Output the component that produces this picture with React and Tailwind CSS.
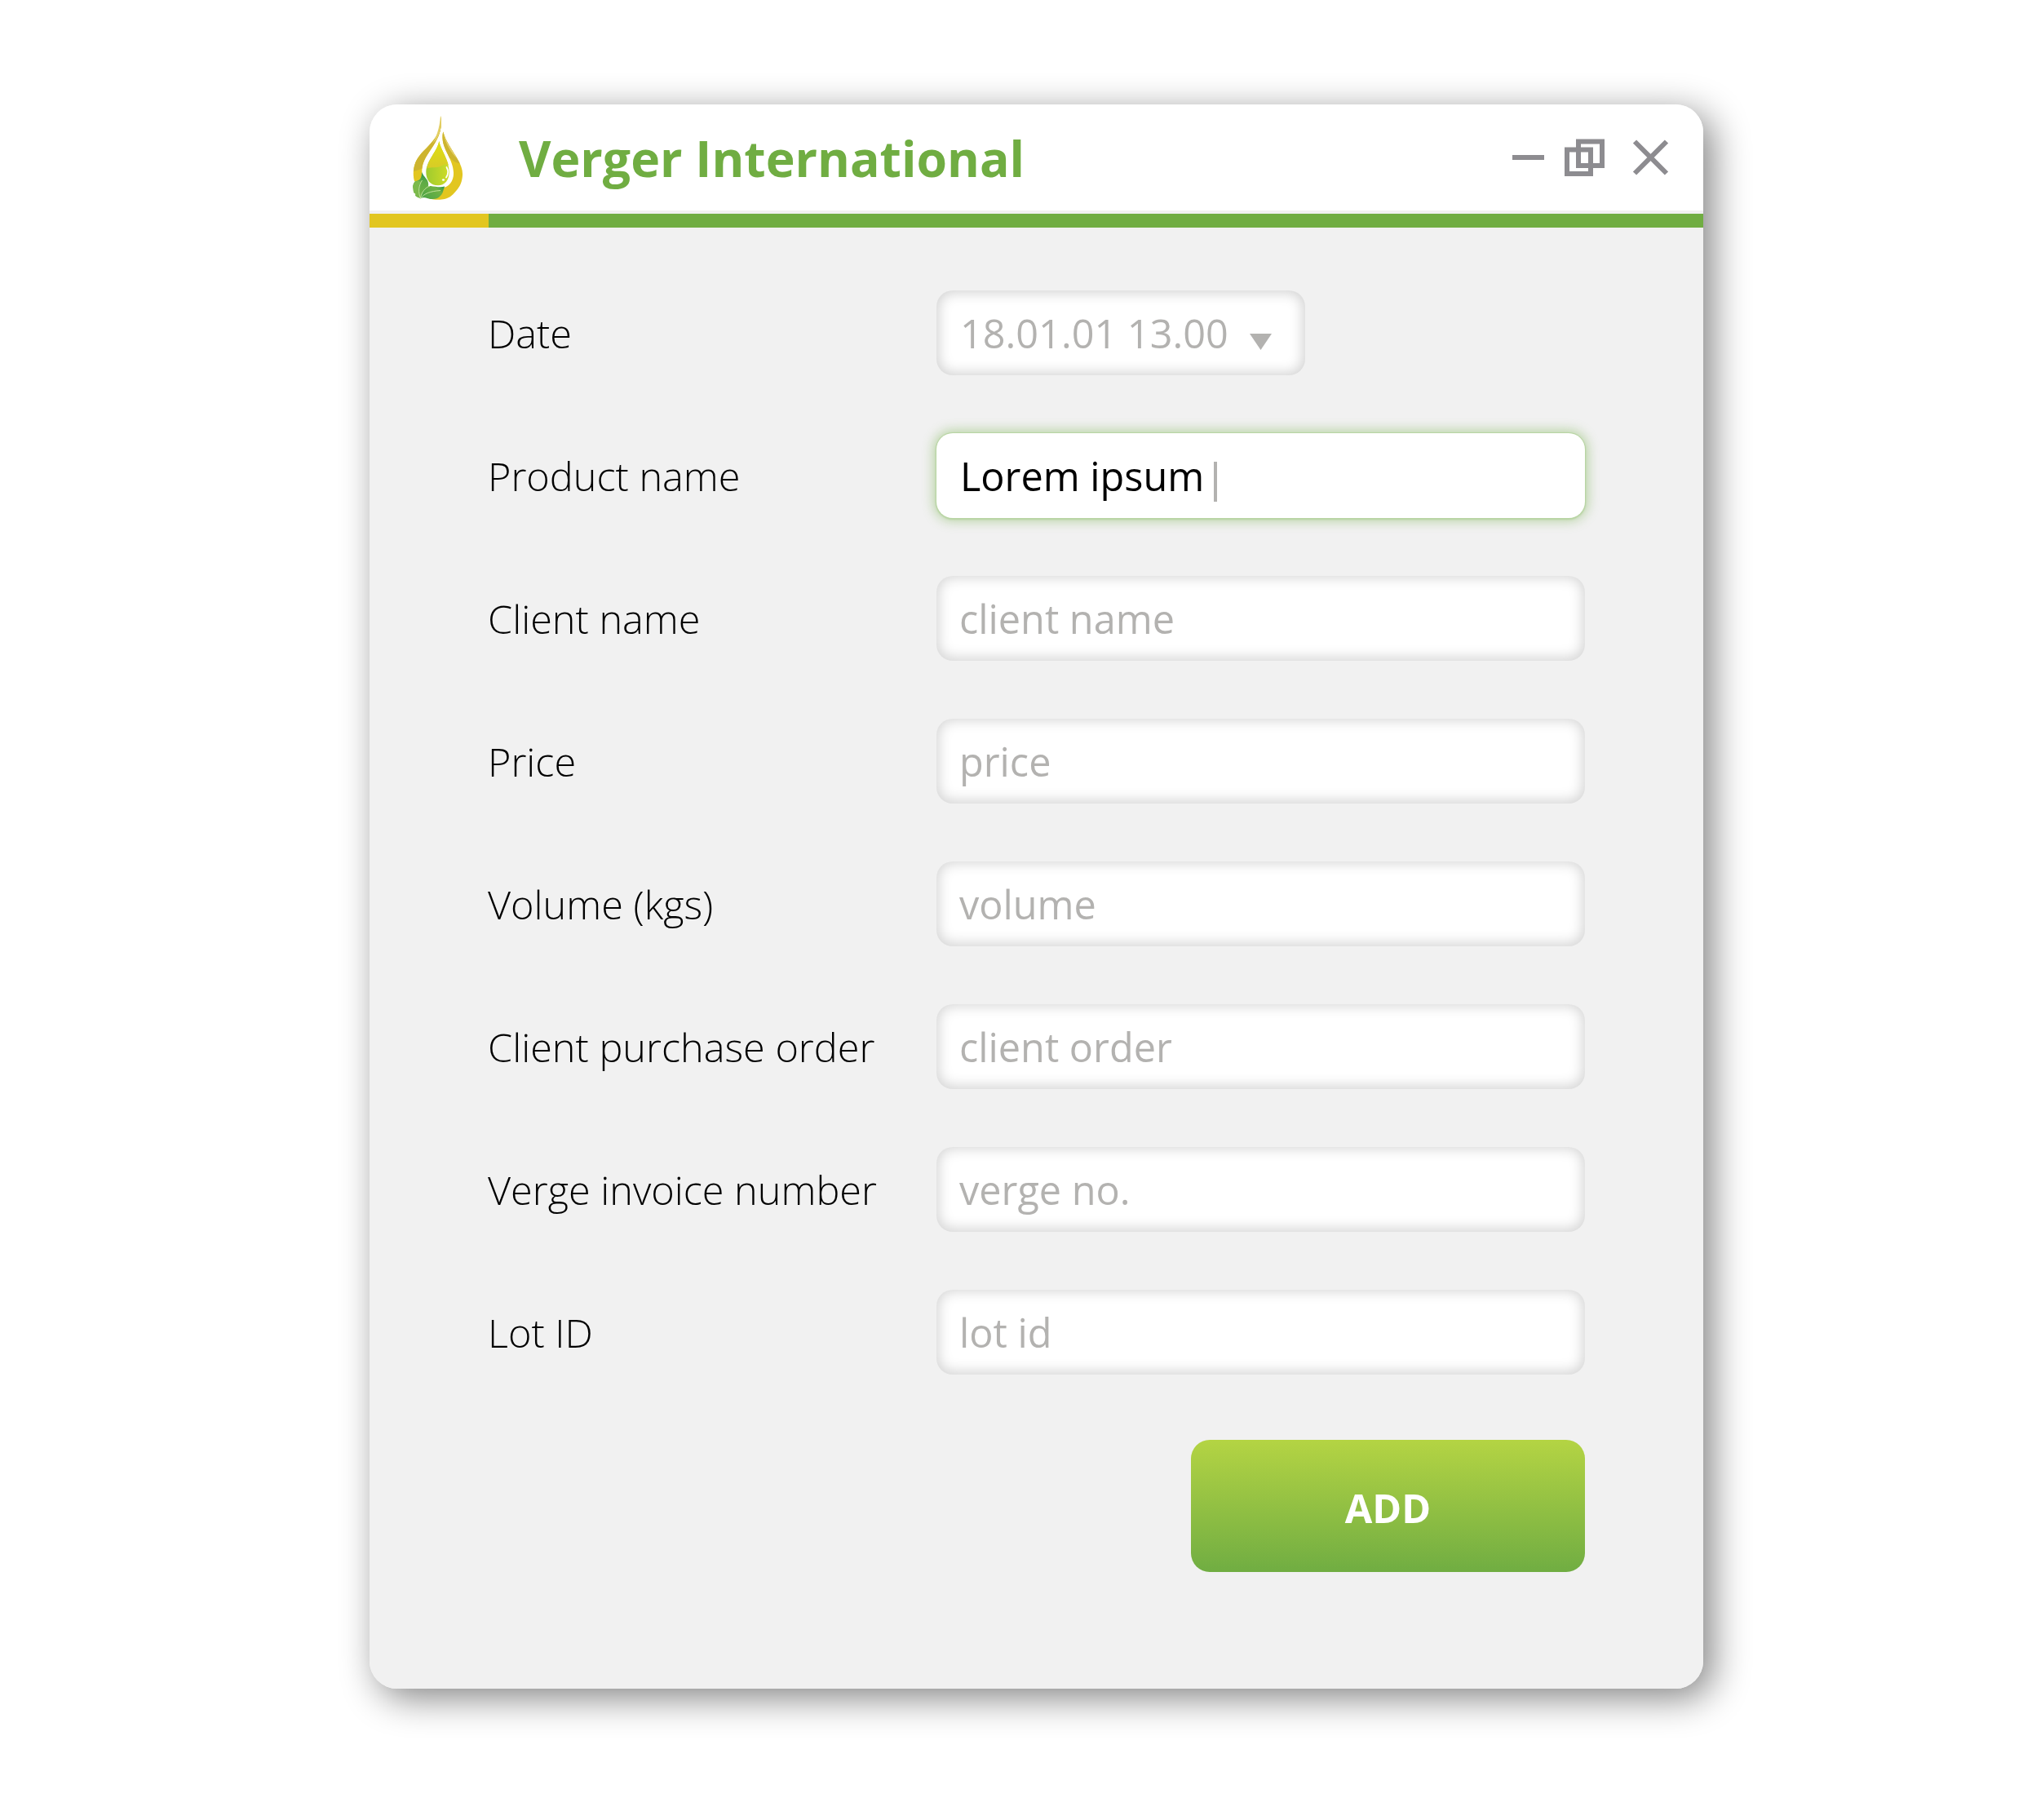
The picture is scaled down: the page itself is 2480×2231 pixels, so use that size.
import React from "react";

const ROWS = [
  { label: "Date", value: "18.01.01 13.00", kind: "select" },
  { label: "Product name", value: "Lorem ipsum", kind: "focused" },
  { label: "Client name", value: "client name" },
  { label: "Price", value: "price" },
  { label: "Volume (kgs)", value: "volume" },
  { label: "Client purchase order", value: "client order" },
  { label: "Verge invoice number", value: "verge no." },
  { label: "Lot ID", value: "lot id" },
];

function Logo() {
  return (
    <svg viewBox="0 0 72 112" className="h-[112px] w-[72px]" aria-hidden="true">
      <defs>
        <linearGradient id="drop" x1="0" y1="0" x2="1" y2="0">
          <stop offset="0" stopColor="#9fcb2e" />
          <stop offset="1" stopColor="#d0dc27" />
        </linearGradient>
        <linearGradient id="dropTop" x1="0" y1="0" x2="0" y2="1">
          <stop offset="0" stopColor="#e0e010" />
          <stop offset="1" stopColor="#d8cb28" />
        </linearGradient>
        <linearGradient id="leafA" x1="0.6" y1="0" x2="0.5" y2="1">
          <stop offset="0" stopColor="#25904a" />
          <stop offset="0.35" stopColor="#5dab45" />
          <stop offset="1" stopColor="#74b544" />
        </linearGradient>
        <linearGradient id="leafB" x1="1" y1="0" x2="0" y2="0.6">
          <stop offset="0" stopColor="#25904a" />
          <stop offset="0.35" stopColor="#6fb244" />
          <stop offset="1" stopColor="#4fa546" />
        </linearGradient>
        <clipPath id="upper">
          <path d="M0 0H72V62C64 64 58 62 52 56L30 56C24 68 16 70 0 74Z" />
        </clipPath>
        <path id="swirls" d="M40 4C42.500 14 40 25 35 34C30 44 22 52 18.500 63C16.500 70 17 80 20 86L8 84C6.500 79 6.500 73 7.300 68.500C8.500 61 11.500 56 16.500 50C24 42 32 35 36.700 25.500C39 19 40.500 12 40 4ZM43.300 23.500C46 35 54 45 61.700 58.500C65 64 67.500 71 67 77C66.500 84 64.500 90 60 95C56 100 52 104.500 45 106C40 107.200 32 107 26 105.500L42 92.500C51 91 56.500 83 56 73.500C55.500 57 42 45 42.500 30C42.500 27.500 42.800 25 43.300 23.500Z" />
      </defs>
      <use href="#swirls" fill="#e2c620" />
      <use href="#swirls" fill="#cdb42f" clipPath="url(#upper)" />
      <path d="M40 4C42.500 14 40 25 35 33L30 38C34 32 39 20 40 4ZM43.300 23.500C46 35 54 45 61 57C54 50 46 40 43.300 23.500Z" fill="#e3cf66" />
      <path d="M38.300 35C40 45 50.700 59 50.700 73C50.700 83 45 89.300 37 89.300C28 89.300 22.300 83 22.300 73C22.300 59 36 48 38.300 35Z" fill="url(#drop)" />
      <path d="M38.300 35C39.800 44 47.500 54 50 65C48 62.500 46 63 42 65C36 68.500 30 66 23.300 68.500C25.500 56 36 47 38.300 35Z" fill="url(#dropTop)" />
      <path d="M47.500 67C50 71.500 49.500 76 47 79.500" stroke="#fff" strokeWidth="1.800" strokeLinecap="round" fill="none" />
      <ellipse cx="43.500" cy="82.500" rx="1.600" ry="1.300" fill="#fff" />
      <path d="M17.300 73C19 79 25 81 25.200 88C25.300 95 18.500 99 15.500 105.500C13 103.500 11 104.500 9 101.500L9.500 99.500C6.500 98.500 7 96 6.500 93C5.500 90 6.800 87 8.500 84.500C10.500 83.500 13 83.500 15 81.500C17 79 16.800 76 17.300 73Z" fill="url(#leafA)" />
      <path d="M15.500 105.500C12 97 12.500 90 16 85C14 83.500 10 84 8.500 85C6.500 88 6 91 6.500 93C7 96 6.500 98.500 9.500 99.500C10 103 13 103 15.500 105.500Z" fill="#7cba4c" />
      <path d="M15.500 105.500C16.500 98 22 89.500 28 90C34 91 41 92 45.200 90.500C43 95 43.500 99 40 102C35 108 26 106 22 104.500C19.500 104 17.500 104 15.500 105.500Z" fill="url(#leafB)" />
      <path d="M15.500 105.500C12.500 97 13 90 17.500 83M15.500 105.500C20 99 27 96.500 40 95.500M15.500 105C16.500 98 21 92 27 90" stroke="#d5ebae" strokeWidth="0.800" fill="none" />
    </svg>
  );
}

function Field({ kind, value }) {
  if (kind === "focused") {
    return (
      <div className="flex h-[104px] w-[795px] items-center rounded-[20px] bg-white pl-[29px] text-black shadow-[0_0_0_1px_#b8d5a3,0_1px_2px_1px_#b5d3a0,0_0_14px_4px_rgba(112,173,66,0.42)]">
        <span>{value}</span>
        <span className="mt-[14px] ml-[12px] h-[49px] w-[4px] bg-[#b3b2b0]" />
      </div>
    );
  }
  if (kind === "select") {
    return (
      <div className="flex h-[104px] w-[452px] items-center rounded-[20px] bg-white pl-[29px] text-[#b3b2b0] shadow-[inset_0_0_16px_3px_rgba(0,0,0,0.18)]">
        <span>{value}</span>
        <svg viewBox="0 0 27 20" className="mt-[22px] ml-[26px] h-[20px] w-[27px]" aria-hidden="true">
          <path d="M0 0H27L13.5 20Z" fill="#b3b2b0" />
        </svg>
      </div>
    );
  }
  return (
    <div className="flex h-[104px] w-[795px] items-center rounded-[20px] bg-white pl-[28px] text-[#b3b2b0] shadow-[inset_0_-1px_16px_3px_rgba(0,0,0,0.17)]">
      <span>{value}</span>
    </div>
  );
}

export default function App() {
  return (
    <div className="h-[2231px] w-[2480px] overflow-hidden bg-white pt-[128px] pl-[453px] font-['Open_Sans',sans-serif]">
      <div className="h-[1942px] w-[1635px] rounded-[34px] shadow-[11px_11px_46px_rgba(0,0,0,0.49)]">
        <div className="flex h-full flex-col overflow-hidden rounded-[34px] bg-[#f1f1f1]">
          <header className="flex h-[130px] shrink-0 items-center bg-white">
            <div className="mt-[2px] ml-[47px] flex">
              <Logo />
            </div>
            <h1 className="mt-[2px] ml-[64px] text-[60.7px] leading-none font-bold whitespace-nowrap text-[#70ad42]">Verger International</h1>
            <svg viewBox="0 0 196 50" className="mr-[40px] ml-auto h-[50px] w-[196px]" fill="none" stroke="#8d8c90" strokeWidth="6" aria-hidden="true">
              <path d="M2 25H41" />
              <path d="M83 5.500H112V35H83Z" />
              <path d="M69 15.500H98V45H69Z" />
              <path d="M152 5.500L191 44.500M191 5.500L152 44.500" />
            </svg>
          </header>
          <div className="mt-[4px] flex h-[17px] shrink-0">
            <div className="w-[146px] bg-[#e2c620]" />
            <div className="flex-1 bg-[#70ad42]" />
          </div>
          <main className="flex flex-col pt-[77px] pr-[145px] pl-[145px] text-[48.6px] leading-none">
            <div className="flex flex-col gap-[71px]">
              {ROWS.map((row) => (
                <div key={row.label} className="flex items-center">
                  <div className="w-[550px] font-light whitespace-nowrap text-black">{row.label}</div>
                  <Field kind={row.kind} value={row.value} />
                </div>
              ))}
            </div>
            <button className="mt-[80px] flex h-[162px] w-[483px] items-center justify-center self-end rounded-[23px] bg-linear-to-b from-[#b4d443] to-[#70ad42] pt-[5px] font-bold text-white">
              ADD
            </button>
          </main>
        </div>
      </div>
    </div>
  );
}
